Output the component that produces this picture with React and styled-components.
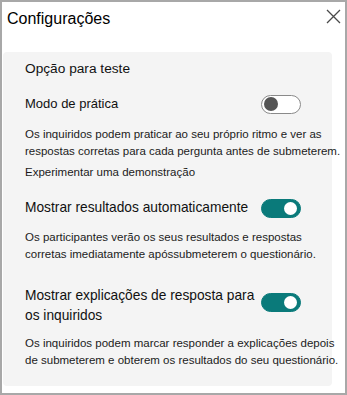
import { createGlobalStyle, styled } from "styled-components";

const GlobalStyle = createGlobalStyle`
  html, body {
    margin: 0;
    padding: 0;
    background: #ffffff;
  }
  body {
    font-family: "Segoe UI", "Liberation Sans", Arial, sans-serif;
    color: #1b1b1b;
  }
  * { box-sizing: border-box; }
`;

const Window = styled.div`
  width: 347px;
  height: 395px;
  border: 2px solid #a8a8a8;
  background: #fff;
  display: flex;
  flex-direction: column;
  overflow: hidden;
`;

const Header = styled.div`
  flex-shrink: 0;
  display: flex;
  align-items: flex-start;
  justify-content: space-between;
  height: 50px;
  padding: 7px 4px 0 5px;
`;

const Title = styled.h1`
  margin: 0;
  font-size: 16px;
  font-weight: 400;
  color: #000;
  line-height: 20px;
`;

const CloseButton = styled.button`
  border: none;
  background: none;
  padding: 0;
  width: 15px;
  height: 15px;
  display: flex;
  cursor: pointer;
`;

const Panel = styled.div`
  flex-shrink: 0;
  margin: 0 13px 0 1px;
  background: #f4f4f4;
  border-radius: 4px;
  padding: 8px 0 17px 22px;
  display: flex;
  flex-direction: column;
`;

const SectionTitle = styled.div`
  font-size: 13.7px;
  line-height: 18px;
  color: #111;
  margin-bottom: 16px;
`;

const Row = styled.div`
  display: grid;
  grid-template-columns: 236px 40px;
  align-items: ${(p) => (p.$top ? "start" : "center")};
  margin-top: ${(p) => p.$gap || 0}px;
`;

const Label = styled.div`
  font-size: ${(p) => p.$size || 13.75}px;
  line-height: 20px;
  color: #111;
  white-space: nowrap;
`;

const Desc = styled.div`
  font-size: 11.5px;
  line-height: 17px;
  color: #1b1b1b;
  white-space: nowrap;
  margin-top: ${(p) => p.$gap || 0}px;
`;

const Line = styled.span`
  display: block;
`;

const Track = styled.div`
  width: 40px;
  height: 19px;
  border-radius: 10px;
  display: flex;
  align-items: center;
  padding: 0 ${(p) => (p.$on ? 3 : 2)}px;
  justify-content: ${(p) => (p.$on ? "flex-end" : "flex-start")};
  background: ${(p) => (p.$on ? "#0a7a7a" : "#ffffff")};
  border: 1px solid ${(p) => (p.$on ? "#0a7a7a" : "#8a8a8a")};
  margin-top: ${(p) => p.$offset || 0}px;
`;

const Thumb = styled.div`
  width: ${(p) => (p.$on ? 13 : 14)}px;
  height: ${(p) => (p.$on ? 13 : 14)}px;
  border-radius: 50%;
  background: ${(p) => (p.$on ? "#ffffff" : "#555555")};
`;

function Toggle({ on, offset }) {
  return (
    <Track $on={on} $offset={offset} role="switch" aria-checked={on}>
      <Thumb $on={on} />
    </Track>
  );
}

function CloseIcon() {
  return (
    <svg width="15" height="15" viewBox="0 0 15 15">
      <path d="M1 1 L14 14 M14 1 L1 14" stroke="#4a4a4a" strokeWidth="1.3" fill="none" />
    </svg>
  );
}

export default function App() {
  return (
    <>
      <GlobalStyle />
      <Window>
        <Header>
          <Title>Configurações</Title>
          <CloseButton aria-label="Fechar">
            <CloseIcon />
          </CloseButton>
        </Header>
        <Panel>
          <SectionTitle>Opção para teste</SectionTitle>
          <Row>
            <Label $size={13}>Modo de prática</Label>
            <Toggle on={false} />
          </Row>
          <Desc $gap={12}>
            <Line>Os inquiridos podem praticar ao seu próprio ritmo e ver as</Line>
            <Line>respostas corretas para cada pergunta antes de submeterem.</Line>
          </Desc>
          <Desc $gap={4}>Experimentar uma demonstração</Desc>
          <Row $gap={17}>
            <Label>Mostrar resultados automaticamente</Label>
            <Toggle on />
          </Row>
          <Desc $gap={11}>
            <Line>Os participantes verão os seus resultados e respostas</Line>
            <Line>corretas imediatamente apóssubmeterem o questionário.</Line>
          </Desc>
          <Row $gap={23} $top>
            <Label>
              <Line>Mostrar explicações de resposta para</Line>
              <Line>os inquiridos</Line>
            </Label>
            <Toggle on offset={7} />
          </Row>
          <Desc $gap={9}>
            <Line>Os inquiridos podem marcar responder a explicações depois</Line>
            <Line>de submeterem e obterem os resultados do seu questionário.</Line>
          </Desc>
        </Panel>
      </Window>
    </>
  );
}
